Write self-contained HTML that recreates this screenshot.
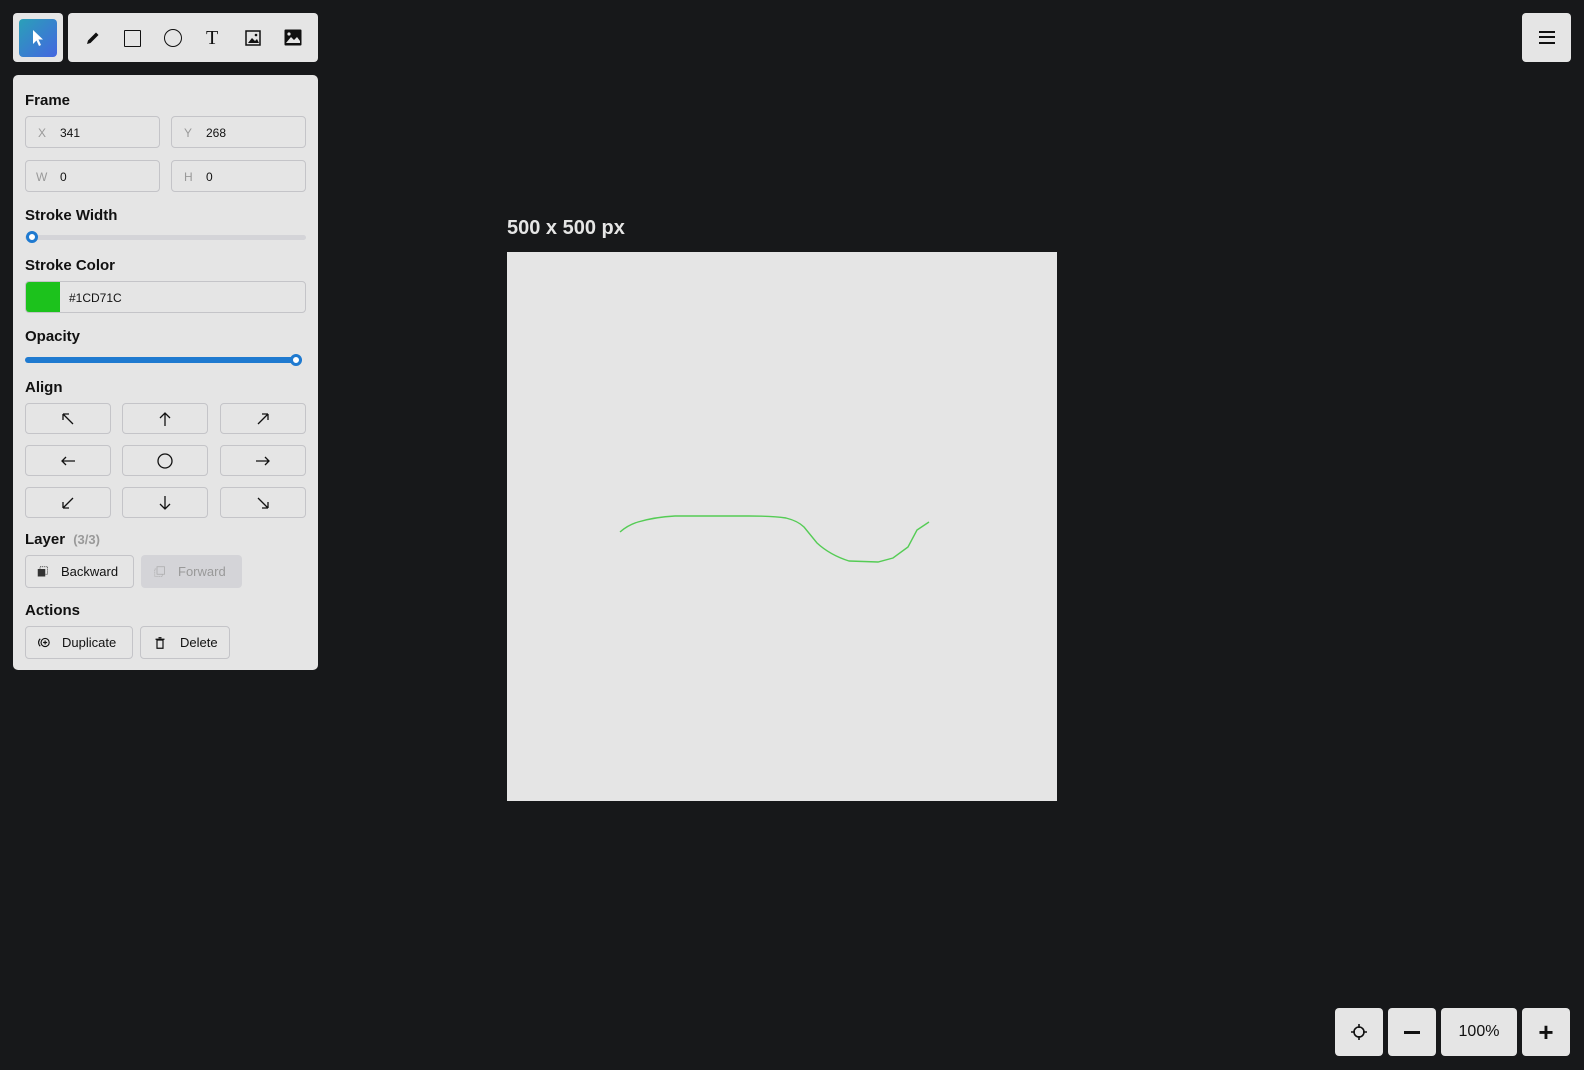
<!DOCTYPE html>
<html><head><meta charset="utf-8"><style>
*{box-sizing:border-box;margin:0;padding:0}
body{width:1584px;height:1070px;background:#17181a;position:relative;overflow:hidden;font-family:"Liberation Sans",sans-serif;color:#111}
.abs{position:absolute}
.box{position:absolute;background:#e5e5e5;border-radius:4px}
.lbl{position:absolute;left:12px;font-weight:bold;font-size:15px}
.inp{position:absolute;height:32px;border:1px solid #c4c4c8;border-radius:4px;font-size:12px}
.inp span{position:absolute;top:9px}
.btn{position:absolute;height:31px;border:1px solid #c4c4c8;border-radius:4px;display:flex;align-items:center;justify-content:center}
.btn svg{width:16px;height:16px}
.zb{position:absolute;top:1008px;height:48px;background:#e5e5e5;border-radius:4px;display:flex;align-items:center;justify-content:center}
</style></head><body>
<div class="box" style="left:13px;top:13px;width:50px;height:49px"></div>
<div class="abs" style="left:19px;top:19px;width:38px;height:38px;border-radius:4px;background:linear-gradient(135deg,#2aa0b8,#4466e0)"></div>
<svg class="abs" style="left:30px;top:29px" width="16" height="18" viewBox="0 0 16 18"><path d="M3 1 L3 15 L6.5 11.5 L9 17 L11 16 L8.5 10.5 L13 10.5 Z" fill="#fff"/></svg>
<div class="box" style="left:68px;top:13px;width:250px;height:49px"></div>
<svg class="abs" style="left:85px;top:30px" width="16" height="16" viewBox="0 0 16 16"><path d="M2 14 L3 10.5 L11 2.5 L13.5 5 L5.5 13 Z" fill="#111"/></svg>
<div class="abs" style="left:124px;top:30px;width:17px;height:17px;border:1.5px solid #111;border-radius:1px"></div>
<div class="abs" style="left:164px;top:29px;width:18px;height:18px;border:1.5px solid #111;border-radius:50%"></div>
<div class="abs" style="left:206px;top:27px;font-family:'Liberation Serif',serif;font-size:20px">T</div>
<svg class="abs" style="left:245px;top:30px" width="16" height="16" viewBox="0 0 16 16"><rect x="1" y="1" width="14" height="14" fill="none" stroke="#111" stroke-width="1.5"/><path d="M3 13 L7 8 L10 11 L12 9 L14 13 Z" fill="#111"/><circle cx="11" cy="5" r="1.3" fill="#111"/></svg>
<svg class="abs" style="left:284px;top:29px" width="18" height="17" viewBox="0 0 18 17"><rect x="0.5" y="0.5" width="17" height="16" rx="1" fill="#111"/><path d="M2 14 L7 8 L10 11 L13 8 L16 12 L16 14 Z" fill="#e5e5e5"/><circle cx="5" cy="5" r="1.6" fill="#e5e5e5"/></svg>

<div class="box" style="left:1522px;top:13px;width:49px;height:49px"></div>
<div class="abs" style="left:1539px;top:31px;width:16px;height:2px;background:#111"></div>
<div class="abs" style="left:1539px;top:36px;width:16px;height:2px;background:#111"></div>
<div class="abs" style="left:1539px;top:42px;width:16px;height:2px;background:#111"></div>

<div class="box" style="left:13px;top:75px;width:305px;height:595px;border-radius:5px">
<div class="lbl" style="top:17px">Frame</div>
<div class="inp" style="left:12px;top:41px;width:135px"><span style="left:12px;color:#999">X</span><span style="left:34px">341</span></div>
<div class="inp" style="left:158px;top:41px;width:135px"><span style="left:12px;color:#999">Y</span><span style="left:34px">268</span></div>
<div class="inp" style="left:12px;top:85px;width:135px"><span style="left:10px;color:#999">W</span><span style="left:34px">0</span></div>
<div class="inp" style="left:158px;top:85px;width:135px"><span style="left:12px;color:#999">H</span><span style="left:34px">0</span></div>
<div class="lbl" style="top:132px">Stroke Width</div>
<div class="abs" style="left:12px;top:160px;width:281px;height:5px;background:#d4d4d8;border-radius:3px"></div>
<div class="abs" style="left:13px;top:156px;width:12px;height:12px;border-radius:50%;background:#fff;border:3px solid #1f7ad0"></div>
<div class="lbl" style="top:182px">Stroke Color</div>
<div class="inp" style="left:12px;top:206px;width:281px;overflow:hidden"><div class="abs" style="left:0;top:0;width:34px;height:30px;background:#1cc21c"></div><span style="left:43px">#1CD71C</span></div>
<div class="lbl" style="top:253px">Opacity</div>
<div class="abs" style="left:12px;top:282px;width:277px;height:6px;background:#1f7ad0;border-radius:3px"></div>
<div class="abs" style="left:277px;top:279px;width:12px;height:12px;border-radius:50%;background:#fff;border:3px solid #1f7ad0"></div>
<div class="lbl" style="top:304px">Align</div>
<div class="btn" style="left:12px;top:328px;width:86px"><svg viewBox="0 0 16 16"><path d="M13 13L3 3M3 3v6M3 3h6" stroke="#111" stroke-width="1.3" fill="none"/></svg></div>
<div class="btn" style="left:109px;top:328px;width:86px"><svg viewBox="0 0 16 16"><path d="M8 15V2M3 7l5-5 5 5" stroke="#111" stroke-width="1.3" fill="none"/></svg></div>
<div class="btn" style="left:207px;top:328px;width:86px"><svg viewBox="0 0 16 16"><path d="M3 13L13 3M13 3H7M13 3v6" stroke="#111" stroke-width="1.3" fill="none"/></svg></div>
<div class="btn" style="left:12px;top:370px;width:86px"><svg viewBox="0 0 16 16"><path d="M15 8H2M6 4L2 8l4 4" stroke="#111" stroke-width="1.3" fill="none"/></svg></div>
<div class="btn" style="left:109px;top:370px;width:86px"><svg viewBox="0 0 16 16"><circle cx="8" cy="8" r="7" stroke="#111" stroke-width="1.3" fill="none"/></svg></div>
<div class="btn" style="left:207px;top:370px;width:86px"><svg viewBox="0 0 16 16"><path d="M1 8h13M10 4l4 4-4 4" stroke="#111" stroke-width="1.3" fill="none"/></svg></div>
<div class="btn" style="left:12px;top:412px;width:86px"><svg viewBox="0 0 16 16"><path d="M13 3L3 13M3 13V7M3 13h6" stroke="#111" stroke-width="1.3" fill="none"/></svg></div>
<div class="btn" style="left:109px;top:412px;width:86px"><svg viewBox="0 0 16 16"><path d="M8 1v13M3 9l5 5 5-5" stroke="#111" stroke-width="1.3" fill="none"/></svg></div>
<div class="btn" style="left:207px;top:412px;width:86px"><svg viewBox="0 0 16 16"><path d="M3 3l10 10M13 13H7M13 13V7" stroke="#111" stroke-width="1.3" fill="none"/></svg></div>
<div class="lbl" style="top:456px">Layer <span style="color:#999;font-size:13px;margin-left:4px">(3/3)</span></div>
<div class="btn" style="left:12px;top:480px;width:109px;height:33px;font-size:13px;justify-content:flex-start;padding-left:11px"><svg viewBox="0 0 16 16" style="width:12px;height:12px;margin-right:12px"><rect x="4" y="1" width="10" height="10" fill="none" stroke="#333" stroke-dasharray="1.5 1"/><rect x="1" y="4" width="10" height="10" fill="#333"/></svg>Backward</div>
<div class="abs" style="left:128px;top:480px;width:101px;height:33px;background:#d4d4d8;border-radius:4px;font-size:13px;color:#999;display:flex;align-items:center;padding-left:13px"><svg viewBox="0 0 16 16" style="width:12px;height:12px;margin-right:12px"><rect x="1" y="4" width="10" height="10" fill="none" stroke="#aaa" stroke-dasharray="1.5 1"/><rect x="4" y="1" width="10" height="10" fill="#d4d4d8" stroke="#aaa"/></svg>Forward</div>
<div class="lbl" style="top:527px">Actions</div>
<div class="btn" style="left:12px;top:551px;width:108px;height:33px;font-size:13px;justify-content:flex-start;padding-left:11px"><svg viewBox="0 0 16 16" style="width:13px;height:13px;margin-right:12px"><circle cx="10" cy="8" r="5" fill="none" stroke="#111" stroke-width="1.4"/><path d="M10 5.5v5M7.5 8h5" stroke="#111" stroke-width="1.4"/><path d="M4 3.5a6 6 0 0 0 0 9" fill="none" stroke="#111" stroke-width="1.4"/></svg>Duplicate</div>
<div class="btn" style="left:127px;top:551px;width:90px;height:33px;font-size:13px;justify-content:flex-start;padding-left:13px"><svg viewBox="0 0 16 16" style="width:12px;height:12px;margin-right:14px"><path d="M4 4h8v11H4z" fill="none" stroke="#111" stroke-width="1.6"/><path d="M2 3h12M6 1h4" stroke="#111" stroke-width="1.6"/></svg>Delete</div>
</div>

<div class="abs" style="left:507px;top:217px;color:#e5e5e5;font-weight:bold;font-size:20px">500 x 500 px</div>
<div class="abs" style="left:507px;top:252px;width:550px;height:549px;background:#e5e5e5"></div>
<svg class="abs" style="left:0;top:0" width="1584" height="1070"><path d="M620 532 Q628 525 638 522 Q655 517 675 516 L749 516 Q772 516 786 518 Q798 521 804 527 L817 543 Q830 555 849 561 L878 562 L893 558 L908 547 L917 530 L929 522" fill="none" stroke="#55cc55" stroke-width="1.4"/></svg>

<div class="zb" style="left:1335px;width:48px"><svg width="18" height="18" viewBox="0 0 18 18"><circle cx="9" cy="9" r="5" fill="none" stroke="#111" stroke-width="1.6"/><path d="M9 1v4M9 13v4M1 9h4M13 9h4" stroke="#111" stroke-width="1.6"/></svg></div>
<div class="zb" style="left:1388px;width:48px"><div style="width:16px;height:3px;background:#111"></div></div>
<div class="zb" style="left:1441px;width:76px;font-size:16px">100%</div>
<div class="zb" style="left:1522px;width:48px;font-size:26px;font-weight:bold">+</div>
</body></html>
